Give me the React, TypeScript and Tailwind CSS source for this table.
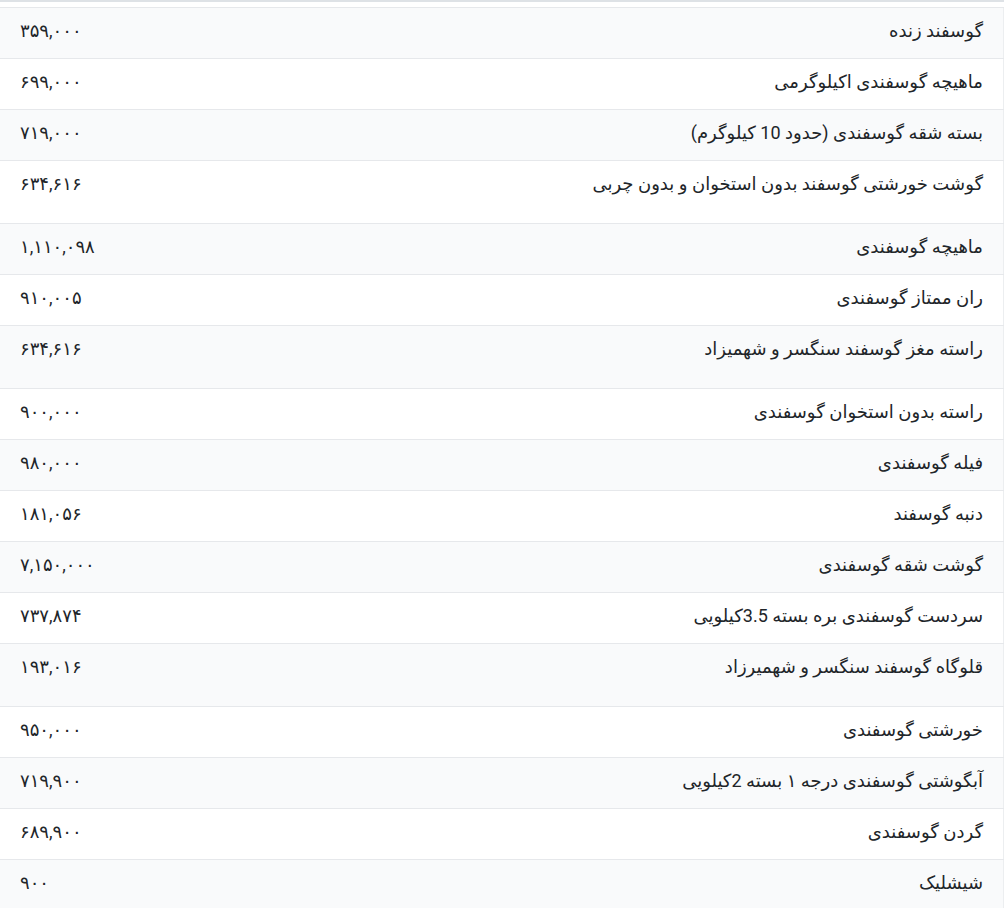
const rows: { name: string; price: string; tall?: boolean }[] = [
  { name: 'گوسفند زنده', price: '۳۵۹,۰۰۰' },
  { name: 'ماهیچه گوسفندی اکیلوگرمی', price: '۶۹۹,۰۰۰' },
  { name: 'بسته شقه گوسفندی (حدود 10 کیلوگرم)', price: '۷۱۹,۰۰۰' },
  { name: 'گوشت خورشتی گوسفند بدون استخوان و بدون چربی', price: '۶۳۴,۶۱۶', tall: true },
  { name: 'ماهیچه گوسفندی', price: '۱,۱۱۰,۰۹۸' },
  { name: 'ران ممتاز گوسفندی', price: '۹۱۰,۰۰۵' },
  { name: 'راسته مغز گوسفند سنگسر و شهمیزاد', price: '۶۳۴,۶۱۶', tall: true },
  { name: 'راسته بدون استخوان گوسفندی', price: '۹۰۰,۰۰۰' },
  { name: 'فیله گوسفندی', price: '۹۸۰,۰۰۰' },
  { name: 'دنبه گوسفند', price: '۱۸۱,۰۵۶' },
  { name: 'گوشت شقه گوسفندی', price: '۷,۱۵۰,۰۰۰' },
  { name: 'سردست گوسفندی بره بسته 3.5کیلویی', price: '۷۳۷,۸۷۴' },
  { name: 'قلوگاه گوسفند سنگسر و شهمیرزاد', price: '۱۹۳,۰۱۶', tall: true },
  { name: 'خورشتی گوسفندی', price: '۹۵۰,۰۰۰' },
  { name: 'آبگوشتی گوسفندی درجه ۱ بسته 2کیلویی', price: '۷۱۹,۹۰۰' },
  { name: 'گردن گوسفندی', price: '۶۸۹,۹۰۰' },
  { name: 'شیشلیک', price: '۹۰۰' },
];

export default function App() {
  return (
    <div
      dir="rtl"
      className="w-[1004px] bg-white text-[#212529] text-[18px] font-['Roboto','DejaVu_Sans',sans-serif]"
    >
      <div className="h-[7px] border-t-2 border-[#dee2e6]" />
      <table className="w-full border-collapse border-r border-[#eceef0]">
        <tbody>
          {rows.map((r, i) => (
            <tr key={i} className={i % 2 === 0 ? 'bg-[#f9fafb]' : 'bg-white'}>
              <td
                className={`border-t border-[#e6e8eb] align-top pr-[20px] pl-3 pt-[10px] leading-[26px] ${
                  r.tall ? 'pb-[26px]' : 'pb-[14px]'
                }`}
              >
                {r.name}
              </td>
              <td
                className="border-t border-[#e6e8eb] align-top text-left pl-[20px] pr-3 pt-[10px] pb-[14px] leading-[26px] w-[300px]"
                dir="ltr"
              >
                {r.price}
              </td>
            </tr>
          ))}
        </tbody>
      </table>
    </div>
  );
}
